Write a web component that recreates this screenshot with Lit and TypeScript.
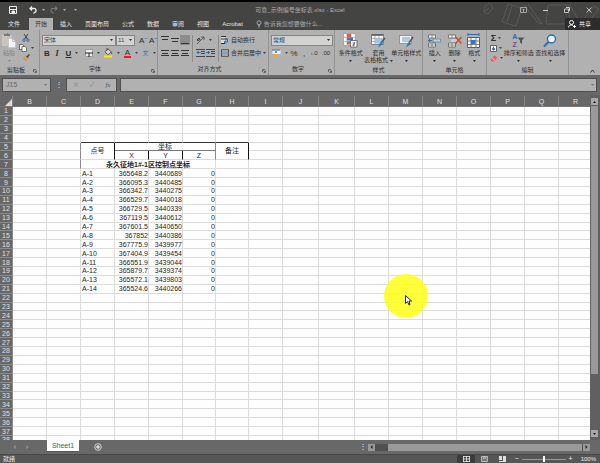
import { LitElement, html, css, svg, nothing } from "lit";
import { customElement } from "lit/decorators.js";
import { classMap } from "lit/directives/class-map.js";

const COLUMNS: [string, number][] = [
  ["B", 34], ["C", 34], ["D", 34], ["E", 34], ["F", 34], ["G", 33], ["H", 33], ["I", 34],
  ["J", 36], ["K", 36], ["L", 34], ["M", 34], ["N", 34], ["O", 34], ["P", 34], ["Q", 34], ["R", 34],
];
const POINTS: string[][] = [
  ["A-1", "365648.2", "3440689", "0"], ["A-2", "366095.3", "3440485", "0"],
  ["A-3", "366342.7", "3440275", "0"], ["A-4", "366529.7", "3440018", "0"],
  ["A-5", "366729.5", "3440339", "0"], ["A-6", "367119.5", "3440612", "0"],
  ["A-7", "367601.5", "3440650", "0"], ["A-8", "367852", "3440386", "0"],
  ["A-9", "367775.9", "3439977", "0"], ["A-10", "367404.9", "3439454", "0"],
  ["A-11", "366551.9", "3439044", "0"], ["A-12", "365879.7", "3439374", "0"],
  ["A-13", "365572.1", "3439803", "0"], ["A-14", "365524.6", "3440266", "0"],
];
const TABS = ["文件", "开始", "插入", "页面布局", "公式", "数据", "审阅", "视图", "Acrobat"];

const icon = (w: number, h: number, body: unknown) =>
  html`<svg width=${w} height=${h} viewBox="0 0 ${w} ${h}" aria-hidden="true">${body}</svg>`;
const lines = (ys: number[]) =>
  icon(8, 10, ys.map((y, i) => svg`<path d="M${i === 1 ? 1 : 0} ${y}.5H${i === 1 ? 7 : 8}" stroke="#333"/>`));

const I = {
  save: icon(8, 8, svg`<path d="M.5.5h7v7h-7z" fill="none" stroke="#eee"/><path d="M1 3.500h6M3 5h2.500v3H3z" stroke="#eee" fill="#eee"/>`),
  undo: icon(8, 8, svg`<path d="M1 2.500h3.500a2 2 0 0 1 1 4L4.500 7.500M3 .5l-2 2 2 2" fill="none" stroke="#eee" stroke-width="1.300"/>`),
  redo: icon(8, 8, svg`<path d="M7 2.500H3.500a2 2 0 0 0-1 4l1 1M5 .5l2 2-2 2" fill="none" stroke="#777" stroke-width="1.200"/>`),
  caret: icon(3, 2, svg`<path d="M0 0h3L1.500 2z" fill="currentColor"/>`),
  paste: icon(14, 15, svg`<path d="M0 2h10v11H0z" fill="#c9c4bd"/><path d="M3 1h1.500l1-1 1 1H8v2H2V1z" fill="#777"/><path d="M6.500 5.500h4l3 3v6h-7z" fill="#f4f4f4" stroke="#bbb" stroke-width=".5"/><path d="M10.500 5.500v3h3" fill="none" stroke="#999" stroke-width=".6"/>`),
  cut: icon(8, 8, svg`<path d="M2 0l3.500 5M6 0L2.500 5" stroke="#333" stroke-width=".9"/><circle cx="2" cy="6.200" r="1.200" fill="none" stroke="#2b6cb0"/><circle cx="6" cy="6.200" r="1.200" fill="none" stroke="#2b6cb0"/>`),
  copy: icon(8, 8, svg`<path d="M.5.5h3l1.500 1.500v3.500h-4.500z" fill="#eee" stroke="#444" stroke-width=".7"/><path d="M3 2.500h3l1.500 1.500v3.500H3z" fill="#fff" stroke="#444" stroke-width=".7"/>`),
  brush: icon(8, 8, svg`<path d="M7.500.5L5 3" stroke="#444" stroke-width="1.500"/><path d="M4 2l2 2-2 3.500L.5 4.500z" fill="#e0934b"/><path d="M4 1.800l2.300 2.300" stroke="#555"/>`),
  border: icon(8, 8, svg`<path d="M.5.500h7v7h-7z" fill="#eee" stroke="#777" stroke-width=".6"/><path d="M0 4h8M4 4v4" stroke="#222"/>`),
  fill: icon(9, 10, svg`<path d="M4 .8l3 3-3 3-3-3z" fill="#ddd" stroke="#333" stroke-width=".8"/><path d="M3 3V0" stroke="#333" stroke-width=".7"/><path d="M7 3l1.500 3H7z" fill="#2b6cb0"/><path d="M0 7.500h8V9.500H0z" fill="#ffee00"/>`),
  orient: icon(9, 9, svg`<path d="M1 8L8 1M5 1h3v3" stroke="#444" fill="none" stroke-width=".8"/><path d="M1 4l2-2 1 1.500-2 1z" fill="none" stroke="#333"/>`),
  outdent: icon(9, 8, svg`<path d="M0 .5h9M5 2.500h4M5 4.500h4M0 7.500h9" stroke="#444"/><path d="M4.500 3.500H1M2.500 2L1 3.500 2.500 5" stroke="#2b6cb0" fill="none"/>`),
  indent: icon(9, 8, svg`<path d="M0 .5h9M5 2.500h4M5 4.500h4M0 7.500h9" stroke="#444"/><path d="M0 3.500h3.500M2 2l1.500 1.500L2 5" stroke="#2b6cb0" fill="none"/>`),
  wrap: icon(8, 8, svg`<path d="M0 0h4v8H0z" fill="#ddd"/><path d="M0 .5h5M0 3h6M0 7.500h4" stroke="#333"/><path d="M5 3h1.500v3H3M4.500 4.500L3 6l1.500 1.500" stroke="#2b6cb0" fill="none"/>`),
  merge: icon(8, 8, svg`<path d="M.5.5h7v7h-7z" fill="#f2f2f2" stroke="#444" stroke-width=".8"/><path d="M0 2h8M0 6h8" stroke="#333" stroke-width=".8"/><path d="M1 4h6" stroke="#2b6cb0" stroke-width="1.200"/>`),
  money: icon(9, 9, svg`<path d="M.5 1h8v4h-8z" fill="#eee"/><path d="M0 1h8" stroke="#2b6cb0"/><circle cx="4" cy="3" r="1" fill="#2b6cb0"/><path d="M2 5h3v1H2zM1 6.500h4v1.500H1z" fill="#e5a356"/>`),
  cond: icon(15, 15, svg`<path d="M.5.5h12v12H.5z" fill="#f4f4f4" stroke="#888" stroke-width=".6"/><path d="M4 1v11M8 1v11M1 4.500h11M1 8.500h11" stroke="#999" stroke-width=".6"/><path d="M4 1h4v3H4zM4 8.500h3v3H4z" fill="#d9603b"/><path d="M4 4.500h6v3H4z" fill="#3b78b8"/><path d="M7.500 7.500h6.500v6.500H7.500z" fill="#fff" stroke="#444" stroke-width=".7"/><path d="M9.500 10h2.500M9.500 12h2.500M12 9l-2 4" stroke="#333" stroke-width=".7"/>`),
  fmtTable: icon(15, 15, svg`<path d="M.5 1.500h12v10H.5z" fill="#f4f4f4" stroke="#666" stroke-width=".7"/><path d="M.5 2h12" stroke="#555" stroke-width="1.500"/><path d="M4 3v8M8 3v8M1 5.500h11M1 8.500h11" stroke="#888" stroke-width=".6"/><path d="M4 5.500h8v5H4z" fill="#9fc3e6"/><path d="M14 5l-4 5" stroke="#555" stroke-width="1.500"/><path d="M10.500 9l1.500 2-5 3.500c1-2 1.500-5 3.500-5.500z" fill="#2b78c0"/>`),
  cellStyle: icon(15, 15, svg`<path d="M.5 2.500h12v8H.5z" fill="#f4f4f4" stroke="#777" stroke-width=".7"/><path d="M3 4h8v5H3z" fill="#a9cbea"/><path d="M14 4l-4 6" stroke="#555" stroke-width="1.500"/><path d="M10.500 9l1.500 2-5 3.500c1-2 1.500-5 3.500-5.500z" fill="#2b78c0"/>`),
  insert: icon(13, 14, svg`<path d="M.5 1h7v3h-7zM.5 9h7v4h-7z" fill="#f4f4f4" stroke="#555" stroke-width=".7"/><path d="M4 1v3M4 9v4M.5 11h7" stroke="#555" stroke-width=".6"/><path d="M5 5h7.500v3H5z" fill="#b6d3ee" stroke="#5a7ea3" stroke-width=".7"/><path d="M4 6.500H.5M2 5L.5 6.500 2 8" stroke="#2b6cb0" fill="none"/>`),
  del: icon(14, 14, svg`<path d="M.5 1h7v3h-7zM.5 9h7v4h-7z" fill="#f4f4f4" stroke="#555" stroke-width=".7"/><path d="M4 1v3M4 9v4M.5 11h7" stroke="#555" stroke-width=".6"/><path d="M3 5h6v3H3z" fill="#b6d3ee"/><path d="M7.500 3l6 6.500M13.500 3l-6 6.500" stroke="#d2481c" stroke-width="1.400"/>`),
  format: icon(14, 15, svg`<path d="M1 1.500h11M1 0v3M12 0v3" stroke="#2b6cb0"/><path d="M.5 4.500h12v10H.5z" fill="#f4f4f4" stroke="#444" stroke-width=".8"/><path d="M4 4.500v10M9 4.500v10M.5 8h12M.5 11.500h12" stroke="#555" stroke-width=".7"/><path d="M4 7h4.500v4H4z" fill="#2b78c0"/>`),
  down: icon(7, 7, svg`<path d="M.5.5h6v6h-6z" fill="#fff" stroke="#444" stroke-width=".8"/><path d="M3.500 1.500v3M2 3.500L3.500 5 5 3.500" stroke="#2b6cb0" stroke-width="1.200" fill="none"/>`),
  erase: icon(8, 7, svg`<path d="M4.500.5l3 2-3 4h-3l-1-2z" fill="#e06666"/><path d="M2 3l3 2.500" stroke="#f3c0c0"/>`),
  funnel: icon(8, 9, svg`<path d="M.5 1.500h7L5 4.500V8L3 6.500v-2z" fill="#555"/>`),
  find: icon(14, 14, svg`<circle cx="8.500" cy="5" r="4" fill="#eaf3fb" stroke="#2b6cb0" stroke-width="1.400"/><path d="M5.500 8L1 12.500" stroke="#2b6cb0" stroke-width="2"/>`),
  bulb: icon(6, 8, svg`<circle cx="3" cy="2.800" r="2" fill="none" stroke="#bbb" stroke-width=".8"/><path d="M2 5.500h2M2 7h2" stroke="#bbb" stroke-width=".8"/>`),
  person: icon(8, 8, svg`<circle cx="3.500" cy="2.500" r="2" fill="none" stroke="#fff"/><path d="M.5 7.500c0-3 4-3 5-1.500M5 6.500h3M6.500 5v3" stroke="#fff" fill="none"/>`),
  ribbonOpt: icon(7, 6, svg`<path d="M.5.5h6v5h-6z" fill="none" stroke="#bbb" stroke-width=".8"/><path d="M3.500 2v3M2.500 3l1-1 1 1" stroke="#bbb" fill="none" stroke-width=".8"/>`),
  min: icon(5, 6, svg`<path d="M0 3.500h5" stroke="#ccc"/>`),
  restore: icon(6, 6, svg`<path d="M.5 2h4v3.500h-4z" fill="none" stroke="#ccc" stroke-width=".9"/><path d="M2 .5h3.500V4" fill="none" stroke="#ccc"/>`),
  close: icon(6, 6, svg`<path d="M.5.5l5 5M5.500.5l-5 5" stroke="#ccc" stroke-width=".9"/>`),
  launch: icon(4, 4, svg`<path d="M.5 3V.5H3M1.500 1.500L3 3M3.500 1.500v2h-2" stroke="#444" fill="none" stroke-width=".7"/>`),
  plus: icon(8, 8, svg`<circle cx="4" cy="4" r="3.300" fill="none" stroke="#ddd" stroke-width=".9"/><path d="M2 4h4M4 2v4" stroke="#fff"/>`),
  left: icon(3, 4, svg`<path d="M2.500 0v4L.5 2z" fill="currentColor"/>`),
  right: icon(3, 4, svg`<path d="M.5 0v4l2-2z" fill="currentColor"/>`),
  gridView: icon(7, 6, svg`<path d="M.5 0v6M3.500 0v6M6.500 0v6M0 .5h7M0 3h7M0 5.500h7" stroke="#eee" stroke-width=".8"/>`),
  pageView: icon(7, 6, svg`<path d="M.5.5h6v5h-6z" fill="#777" stroke="#bbb"/><path d="M2 2h3" stroke="#ddd"/>`),
  breakView: icon(7, 6, svg`<path d="M0 0h3v4H0zM4 0h3v6H0V5h4z" fill="#ddd"/>`),
  pointer: icon(7, 11, svg`<path d="M.5.5v8l2-2 1.500 3.500 1-.5L4 6h2.500z" fill="#fff" stroke="#111" stroke-width=".9"/>`),
};

const tool = (label: string, cls: string, body: unknown, caret = false) =>
  html`<button class="tool ${cls}" aria-label=${label}>${body}${caret ? html`<i class="car">${I.caret}</i>` : nothing}</button>`;
const big = (pic: unknown, l1: string, l2 = "") =>
  html`<button class="big"><span class="pic">${pic}</span><span>${l1}</span><span class="second">${l2}${I.caret}</span></button>`;
const group = (cls: string, name: string, body: unknown, launcher = true) => html`
  <section class="group ${cls}"><div class="body">${body}</div>
    <footer class=${launcher ? "led" : ""}><span>${name}</span>${launcher ? html`<button class="launch" aria-label="${name}设置">${I.launch}</button>` : nothing}</footer>
  </section>`;

@customElement("excel-ribbon")
export class ExcelRibbon extends LitElement {
  static styles = css`
    :host { display: flex; height: 45px; background: #b1b1b2; color: #2d2d2d; font-size: 6px; line-height: 7px; }
    button, select { font: inherit; color: inherit; background: none; border: 0; padding: 0; margin: 0; }
    svg { display: block; flex: none; }
    .group { display: flex; flex-direction: column; box-sizing: border-box; flex: none; position: relative; padding: 3px 2px 2px; border-right: 1px solid #929292; }
    .body { flex: 1; display: flex; }
    footer { display: flex; justify-content: center; height: 7px; white-space: nowrap; }
    footer.led { padding-right: 7px; }
    .launch { position: absolute; right: 2px; bottom: 2px; }
    .clip { width: 40px; } .font { width: 118px; } .align { width: 111px; } .num { width: 66px; }
    .styles { width: 88px; } .cells { width: 64px; } .edit { width: 82px; }
    .rows { flex: 1; display: flex; flex-direction: column; gap: 3px; padding-top: 2px; }
    .row { display: flex; align-items: center; height: 10px; white-space: nowrap; }
    .tool { display: flex; align-items: center; justify-content: center; gap: 2px; width: 10px; height: 10px; flex: none; white-space: nowrap; }
    .mid { width: 18px; gap: 4px; } .wide { width: 20px; gap: 4px; } .auto { width: auto; gap: 2px; } .slim { width: 14px; }
    .on { background: #8d8d8d; }
    .car { color: #444; }
    .glyph { font-size: 8px; } .bold { font-weight: 700; } .ital { font-style: italic; font-family: "Liberation Serif", serif; font-weight: 700; } .under { text-decoration: underline; }
    .red { border-bottom: 2px solid #f01818; line-height: 7px; padding: 0 1px; }
    .sum { font-size: 9px; font-weight: 700; }
    .blue { color: #2b6cb0; } .purple { color: #7d4a93; }
    .combo { position: relative; display: flex; flex: 1; box-sizing: border-box; height: 11px; border: 1px solid #858585; background: #d2d2d0; align-items: center; }
    .combo.size { flex: 0 0 19px; margin-right: 3px; }
    .combo select { appearance: none; width: 100%; height: 9px; padding-left: 1px; font-size: 6px; outline: none; color: #27496d; }
    .combo .arrow { position: absolute; right: 2px; }
    .sep { width: 1px; background: #8b8b8b; margin: 2px 2px 4px; }
    .big { display: flex; flex-direction: column; align-items: center; flex: 1 1 0; min-width: 0; white-space: nowrap; height: 34px; }
    .pic { display: flex; height: 15px; align-items: center; justify-content: center; margin-bottom: 2px; }
    .second { display: flex; align-items: center; justify-content: center; gap: 2px; height: 7px; }
    .dim { color: #858585; display: flex; }
    .stack { display: flex; flex-direction: column; justify-content: space-between; height: 30px; }
    .az { display: flex; flex-direction: column; font-size: 7px; line-height: 8px; font-weight: 700; }
    .tail { flex: 1; display: flex; align-items: flex-end; justify-content: flex-end; padding: 0 5px 2px 0; }
  `;
  render() {
    return html`
      ${group("clip", "剪贴板", html`<span class="dim">${big(I.paste, "粘贴")}</span>
        <div class="stack">${tool("剪切", "wide", I.cut)}${tool("复制", "wide", I.copy, true)}${tool("格式刷", "wide", I.brush)}</div>`)}
      ${group("font", "字体", html`<div class="rows">
        <div class="row"><label class="combo"><select aria-label="字体"><option>宋体</option></select><i class="arrow">${I.caret}</i></label>
          <label class="combo size"><select aria-label="字号"><option>11</option></select><i class="arrow">${I.caret}</i></label>
          ${tool("增大字号", "", html`<span class="glyph">A<span class="blue">ˆ</span></span>`)}${tool("减小字号", "", html`<span class="glyph">A<span class="blue">ˇ</span></span>`)}</div>
        <div class="row">${tool("加粗", "", html`<b class="glyph">B</b>`)}${tool("倾斜", "", html`<span class="glyph ital">I</span>`)}
          ${tool("下划线", "wide", html`<span class="glyph bold under">U</span>`, true)}${tool("边框", "wide", I.border, true)}
          ${tool("填充颜色", "wide", I.fill, true)}${tool("字体颜色", "mid", html`<span class="glyph red">A</span>`, true)}${tool("拼音", "mid", html`<span class="blue">文</span>`, true)}</div></div>`)}
      ${group("align", "对齐方式", html`<div class="rows">
        <div class="row">${tool("顶端对齐", "", lines([1, 4]))}${tool("垂直居中", "", lines([3, 6]))}${tool("底端对齐", "on", lines([8]))}</div>
        <div class="row">${tool("左对齐", "", lines([2, 5, 7]))}${tool("居中", "", lines([2, 5, 7]))}${tool("右对齐", "", lines([2, 5, 7]))}</div></div>
        <span class="sep"></span>
        <div class="rows"><div class="row">${tool("方向", "mid", I.orient, true)}</div><div class="row">${tool("减少缩进", "", I.outdent)}${tool("增加缩进", "", I.indent)}</div></div>
        <span class="sep"></span>
        <div class="rows"><div class="row">${tool("自动换行", "auto", html`${I.wrap}<span>自动换行</span>`)}</div>
          <div class="row">${tool("合并后居中", "auto", html`${I.merge}<span>合并后居中</span>`, true)}</div></div>`)}
      ${group("num", "数字", html`<div class="rows">
        <div class="row"><label class="combo"><select aria-label="数字格式"><option>常规</option></select><i class="arrow">${I.caret}</i></label></div>
        <div class="row">${tool("货币", "mid", I.money, true)}${tool("百分比", "", html`<span class="glyph">%</span>`)}${tool("千位", "", html`<span class="glyph">,</span>`)}
          ${tool("增加小数", "", html`<span><span class="blue">‹</span>.0</span>`)}${tool("减少小数", "slim", html`<span>.00</span>`)}</div></div>`)}
      ${group("styles", "样式", html`${big(I.cond, "条件格式")}${big(I.fmtTable, "套用", "表格格式")}${big(I.cellStyle, "单元格样式")}`, false)}
      ${group("cells", "单元格", html`${big(I.insert, "插入")}${big(I.del, "删除")}${big(I.format, "格式")}`, false)}
      ${group("edit", "编辑", html`<div class="stack">${tool("求和", "slim", html`<span class="sum">Σ</span>`, true)}${tool("填充", "slim", I.down, true)}${tool("清除", "slim", I.erase, true)}</div>
        ${big(html`<span class="az"><span class="blue">A</span><span class="purple">Z</span></span>${I.funnel}`, "排序和筛选")}${big(I.find, "查找和选择")}`, false)}
      <div class="tail"><button aria-label="折叠功能区">${icon(5, 4, svg`<path d="M.5 3.500l2-2.500 2 2.500" fill="none" stroke="#333"/>`)}</button></div>`;
  }
}

@customElement("excel-grid")
export class ExcelGrid extends LitElement {
  static styles = css`
    :host { display: flex; min-height: 0; overflow: hidden; background: #686868; }
    .sheet { flex: 1; min-width: 0; overflow: hidden; margin-top: 1px; }
    table { table-layout: fixed; width: 593px; min-width: 100%; height: 349px; border-collapse: separate; border-spacing: 0; font-size: 7px; line-height: 7px; color: #1d1d28; }
    th, td { padding: 0; white-space: nowrap; box-sizing: border-box; }
    th { background: #676767; color: #e0e0e4; font-weight: 400; text-align: center; overflow: hidden; }
    thead th { height: 11px; border-right: 1px solid #858585; border-bottom: 1px solid #777; font-size: 7px; }
    tbody th { border-bottom: 1px solid #8c8c8c; border-right: 1px solid #8c8c8c; }
    td { background: #fefefe; border-right: 1px solid #dcdcdc; border-bottom: 1px solid #dcdcdc; text-align: center; }
    .num { text-align: right; } .name { text-align: left; padding-left: 1px; }
    .above { border-bottom-color: #333; } .thick { border-right-color: #111; } .rule { border-bottom-color: #777; }
    .soft { border-right-color: #888; } .title { font-weight: 700; }
    .corner { height: 8px; vertical-align: bottom; }
    .corner svg { display: block; margin-left: auto; }
    .bar { width: 10px; flex: none; display: flex; flex-direction: column; gap: 1px; padding: 3px 2px 3px 1px; box-sizing: border-box; background: #606060; }
    .bar button { height: 7px; padding: 0; border: 0; background: #a8a8a8; color: #222; display: grid; place-items: center; }
    .flip { transform: rotate(180deg); }
    .thumb { flex: 5; background: #999; } .rest { flex: 1; }
  `;
  private cells(r: number) {
    return COLUMNS.map(([c]) => {
      if (r === 5 && c === "D") return html`<td rowspan="2" class="thick">点号</td>`;
      if (r === 5 && c === "E") return html`<td colspan="3" class="rule soft">坐标</td>`;
      if (r === 5 && c === "H") return html`<td rowspan="2" class="thick">备注</td>`;
      if (r === 5 && "FG".includes(c)) return nothing;
      if (r === 6 && "DH".includes(c)) return nothing;
      if (r === 6 && "EFG".includes(c)) return html`<td class=${c === "G" ? "soft" : "thick"}>${{ E: "X", F: "Y", G: "Z" }[c]}</td>`;
      if (r === 7 && c === "D") return html`<td colspan="4" class="title">永久征地1#-1区控制点坐标</td>`;
      if (r === 7 && "EFG".includes(c)) return nothing;
      const i = "DEFG".indexOf(c);
      const p = POINTS[r - 8];
      const edge = c === "C" && r > 4 && r < 8;
      return html`<td class=${classMap({ above: r === 4 && "DEFGH".includes(c), soft: edge, name: i === 0, num: i > 0 })}>${p && i >= 0 ? p[i] : nothing}</td>`;
    });
  }
  render() {
    return html`<div class="sheet"><table>
        <colgroup><col width="13">${COLUMNS.map(([, w]) => html`<col width=${w}>`)}</colgroup>
        <thead><tr><th class="corner">${icon(7, 7, svg`<path d="M7 0v7H0z" fill="#ddd"/>`)}</th>${COLUMNS.map(([c]) => html`<th scope="col">${c}</th>`)}</tr></thead>
        <tbody>${Array.from({ length: 38 }, (_, i) => html`<tr><th scope="row">${i + 1}</th>${this.cells(i + 1)}</tr>`)}</tbody>
      </table></div>
      <div class="bar"><button aria-label="向上滚动"><span class="flip">${I.caret}</span></button><div class="thumb"></div><div class="rest"></div><button aria-label="向下滚动">${I.caret}</button></div>`;
  }
}

@customElement("app-root")
export class AppRoot extends LitElement {
  static styles = css`
    :host { display: flex; flex-direction: column; height: 100vh; position: relative; overflow: hidden; background: #686868; font-family: "Liberation Sans", "Noto Sans CJK SC", sans-serif; font-size: 6px; line-height: 8px; }
    button, input { font: inherit; color: inherit; background: none; border: 0; padding: 0; margin: 0; min-width: 0; }
    svg { display: block; }
    .top { position: relative; background: #444443; border-top: 2px solid #000; color: #e6e6e6; flex: none; }
    .doodle { position: absolute; right: 0; top: 0; }
    .titlebar { position: relative; display: grid; grid-template-columns: 1fr auto 1fr; align-items: center; height: 16px; color: #b0b0b0; }
    .quick { display: flex; align-items: center; gap: 5px; padding-left: 9px; }
    .quick .first { margin-right: 7px; }
    .quick .more { margin-left: 3px; }
    .win { display: flex; justify-content: flex-end; gap: 16px; padding-right: 8px; }
    .tabs { position: relative; display: flex; align-items: stretch; height: 12px; gap: 1px; white-space: nowrap; }
    .tab { padding: 0 6px; }
    .tab.file { padding: 0 8px; }
    .tab.on { background: #b1b1b2; color: #333; }
    .tell { display: flex; align-items: center; gap: 2px; color: #a8a8a8; padding-left: 6px; }
    .share { margin-left: auto; display: flex; align-items: center; gap: 3px; background: #2c2c2c; padding: 0 9px 0 3px; color: #fff; }
    .formula { display: flex; align-items: center; gap: 3px; height: 20px; padding: 0 3px 0 2px; box-sizing: border-box; flex: none; }
    .box { display: flex; align-items: center; box-sizing: border-box; height: 14px; background: #b1b1b2; border: 1px solid #4f4f4f; color: #777; }
    .name { width: 49px; padding: 0 3px; } .name input { flex: 1; width: 20px; color: #666; font-size: 7px; }
    .dots { color: #ddd; width: 9px; text-align: center; font-size: 8px; }
    .acts { width: 51px; justify-content: space-around; font-size: 7px; } .acts button { color: #8c8c8c; } .acts .fx { color: #555; font-family: "Liberation Serif", serif; font-style: italic; }
    .entry { flex: 1; padding-right: 2px; } .entry input { flex: 1; }
    excel-grid { flex: 1; }
    .sheets { display: flex; align-items: center; height: 14px; flex: none; color: #999; }
    .nav { display: flex; gap: 10px; width: 47px; padding-left: 13px; box-sizing: border-box; }
    .sheet { align-self: flex-start; height: 12px; width: 32px; background: #fefefe; border-bottom: 1px solid #217346; color: #217362; font-size: 7px; margin-right: 15px; }
    .hdots { margin-left: auto; color: #eee; font-size: 8px; width: 9px; }
    .hbar { display: flex; width: 37%; height: 7px; background: #505050; margin-right: 10px; }
    .hbar button { width: 7px; background: #999; color: #222; display: grid; place-items: center; }
    .hthumb { flex: 1; background: #9a9a9a; margin-left: 13px; border-right: 1px solid #555; }
    .status { display: flex; align-items: center; height: 9px; flex: none; padding: 0 4px 0 3px; background: #565656; border-top: 1px solid #484848; box-sizing: border-box; color: #eee; }
    .views { display: flex; margin-left: auto; margin-right: 3px; } .views button { width: 18px; height: 8px; display: grid; place-items: center; } .views .on { background: #3c3c3c; }
    .zoom { display: flex; align-items: center; gap: 3px; font-size: 7px; }
    .zoom input { appearance: none; width: 44px; height: 1px; background: #999; }
    .zoom input::-webkit-slider-thumb { appearance: none; width: 2px; height: 6px; background: #fff; }
    .pct { margin-left: 5px; font-size: 6px; }
    .halo { position: absolute; left: 384px; top: 274px; width: 44px; height: 44px; border-radius: 50%; background: rgba(255, 255, 30, 0.88); display: grid; place-items: center; pointer-events: none; }
    .halo svg { margin: 8px 0 0 5px; }
  `;
  render() {
    return html`
      <header class="top">
        <svg class="doodle" width="120" height="28" viewBox="0 0 120 28" fill="none" stroke="#606060" stroke-width=".8" aria-hidden="true"><path d="M4 5l6-4 3 5-5 6-4-2zM22 20l6-18 14 4-6 18zM27 20l5-16M48 2l14 20-4-1-14-18M68 3h22l8 14-6 5H66zM88 3l2 18M98 24l16-20 5 3-15 18zM4 10l5-4"/></svg>
        <div class="titlebar">
          <div class="quick"><button class="first" aria-label="保存">${I.save}</button><button aria-label="撤消">${I.undo}</button>${I.caret}<button aria-label="恢复">${I.redo}</button>${I.caret}<button class="more" aria-label="自定义">${I.caret}</button></div>
          <span>可靠_示例编号坐标表.xlsx - Excel</span>
          <div class="win"><button aria-label="功能区选项">${I.ribbonOpt}</button><button aria-label="最小化">${I.min}</button><button aria-label="还原">${I.restore}</button><button aria-label="关闭">${I.close}</button></div>
        </div>
        <nav class="tabs">${TABS.map((t, i) => html`<button class=${classMap({ tab: true, file: i === 0, on: i === 1 })}>${t}</button>`)}
          <button class="tell">${I.bulb}告诉我您想要做什么...</button><button class="share">${I.person}共享</button></nav>
      </header>
      <excel-ribbon></excel-ribbon>
      <div class="formula">
        <div class="box name"><input aria-label="名称框" value="J15">${I.caret}</div><span class="dots">⋮</span>
        <div class="box acts"><button aria-label="取消">✕</button><button aria-label="输入">✓</button><button class="fx" aria-label="插入函数">fx</button></div>
        <div class="box entry"><input aria-label="编辑栏">${I.caret}</div>
      </div>
      <excel-grid></excel-grid>
      <div class="sheets"><div class="nav"><button aria-label="上一张">${I.left}</button><button aria-label="下一张">${I.right}</button></div>
        <button class="sheet">Sheet1</button><button aria-label="新工作表">${I.plus}</button><span class="hdots">⋮</span>
        <div class="hbar"><button aria-label="向左滚动">${I.left}</button><div class="hthumb"></div><button aria-label="向右滚动">${I.right}</button></div></div>
      <footer class="status"><span>就绪</span>
        <div class="views"><button class="on" aria-label="普通">${I.gridView}</button><button aria-label="页面布局">${I.pageView}</button><button aria-label="分页预览">${I.breakView}</button></div>
        <div class="zoom"><button aria-label="缩小">−</button><input type="range" aria-label="显示比例" min="0" max="100" value="50"><button aria-label="放大">+</button><span class="pct">100%</span></div></footer>
      <div class="halo">${I.pointer}</div>`;
  }
}
